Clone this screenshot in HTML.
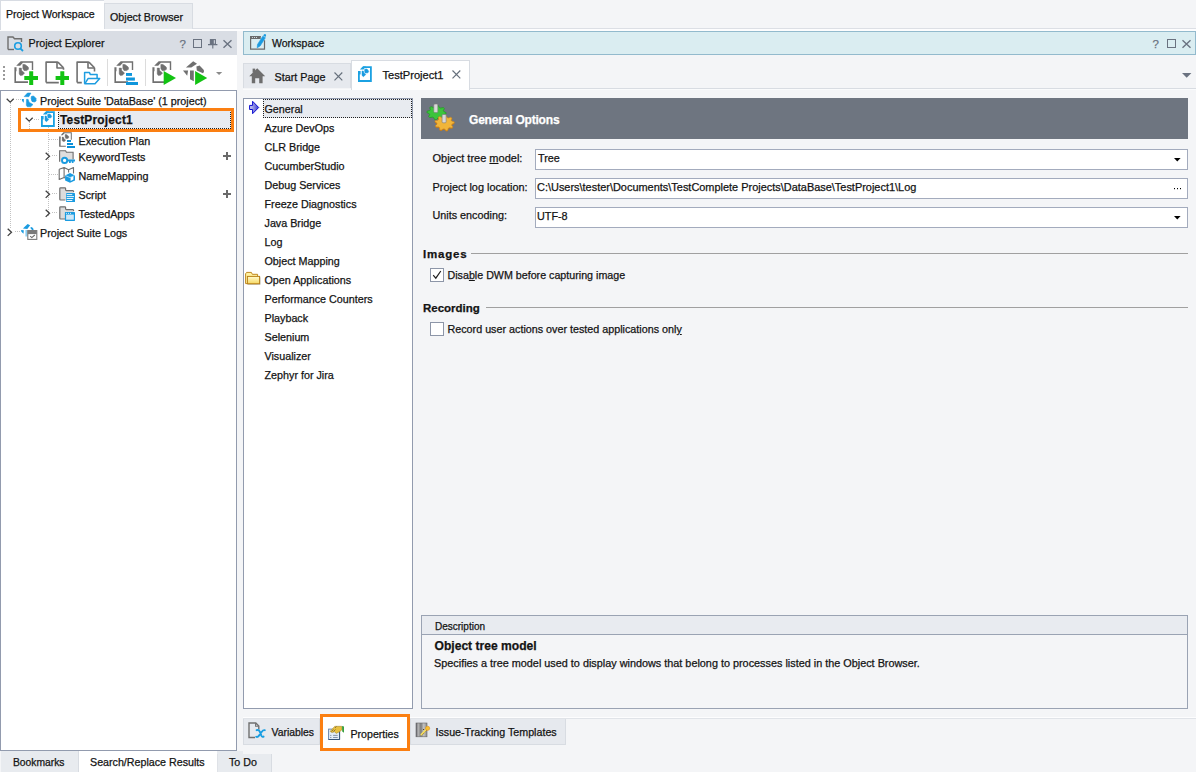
<!DOCTYPE html>
<html><head><meta charset="utf-8">
<style>
html,body{margin:0;padding:0;}
body{width:1196px;height:772px;position:relative;overflow:hidden;background:#f4f5f7;font-family:"Liberation Sans",sans-serif;font-size:10.8px;color:#141414;}
.a{position:absolute;}
.t{position:absolute;white-space:nowrap;line-height:13px;-webkit-text-stroke-width:0.25px;}
.w{-webkit-text-stroke:0.25px #fff;}
.b{font-weight:bold;}
svg{position:absolute;overflow:visible;}
</style></head><body>

<!-- top doc tabs -->
<div class="a" style="left:0;top:28px;width:1196px;height:1px;background:#dcdfe5"></div>
<div class="a" style="left:0;top:29px;width:1196px;height:2px;background:#fdfdfe"></div>
<div class="a" style="left:0;top:0;width:104px;height:30px;background:#fff;border-left:1px solid #d8dce3;border-top:1px solid #d8dce3;box-sizing:border-box"></div>
<div class="t" style="left:6px;top:8px;font-size:10.6px">Project Workspace</div>
<div class="a" style="left:104px;top:3px;width:89px;height:26px;background:#e8ebef;border:1px solid #d8dce2;border-bottom:none;box-sizing:border-box"></div>
<div class="t" style="left:110px;top:11px;font-size:10.7px">Object Browser</div>

<!-- left panel header -->
<div class="a" style="left:0;top:31px;width:237px;height:24px;background:#d9dde4"></div>
<div class="t" style="left:28.5px;top:37px;font-size:10.7px">Project Explorer</div>

<!-- toolbar -->
<div class="a" style="left:0;top:55px;width:237px;height:35px;background:#fff"></div>

<!-- tree -->
<div class="a" style="left:0;top:90px;width:237px;height:661px;background:#fff;border:1px solid #929bae;box-sizing:border-box"></div>


<svg width="0" height="0" style="position:absolute">
<defs>
<g id="tcdoc">
<path d="M4.2 6.7 L8.7 2.2 H21.2 V10.9 H19.8 V3.8 H10.9 L8.2 6.7 Z" fill="#707070"/>
<path d="M2.4 8.3 H4.5 V12.3 H4 V22.3 H16 V24 H2.4 Z" fill="#707070"/>
<path d="M7.2 9 H9.4 L9.7 11.6 L12.6 14 L10.5 16.3 L8.3 16.6 L7.2 15 Z" fill="#707070" stroke="#707070" stroke-width="0.4" stroke-linejoin="round"/>
<path d="M10.9 5.4 L12.9 5.5 L16.2 8 L16.5 10.2 L14.5 11.6 L12 11.5 L10.9 9.5 Z" fill="#707070" stroke="#707070" stroke-width="0.6" stroke-linejoin="round"/>
</g>
<g id="tclogo">
<path d="M5.2 6.6 L8.5 3 L11.9 3.1 L9.8 6.7 Z" fill="#1a9be0" stroke="#1a9be0" stroke-width="0.6" stroke-linejoin="round"/>
<path d="M2.8 9.1 H4.9 L4.7 12.7 L3.1 11.1 Z" fill="#1a9be0"/>
<path d="M7.5 9.3 H9.1 L10.1 12.2 L14 14.5 L11.7 16.8 H8.3 L7.3 15.3 Z" fill="#1a9be0" stroke="#1a9be0" stroke-width="0.5" stroke-linejoin="round"/>
<path d="M12.4 6.5 L14.5 6 L16.8 8.3 L17.1 10.9 L15.3 11.9 L13 11.4 L12.2 8.5 Z" fill="#1a9be0" stroke="#1a9be0" stroke-width="0.8" stroke-linejoin="round"/>
</g>
<g id="fold"><path d="M14.9 3.1 H3.1 V23.6" fill="none" stroke="#707070" stroke-width="1.6" stroke-linejoin="round"/><path d="M14.9 3.1 L20.5 8.7" fill="none" stroke="#707070" stroke-width="1.6"/><path d="M14 3.1 V9 H20.5" fill="none" stroke="#707070" stroke-width="1.6" stroke-linejoin="round"/></g>
<g id="chevd"><path d="M0.7 0.7 L4.2 4.2 L7.7 0.7" fill="none" stroke="#404040" stroke-width="1.3"/></g>
<g id="chevr"><path d="M0.7 0.7 L4.2 4.2 L0.7 7.7" fill="none" stroke="#404040" stroke-width="1.3"/></g>
<g id="gfolder"><path d="M1 14 V1.5 H6 L7.5 3.2 H15 V14 Z" fill="#dcdcdc" stroke="#707070" stroke-width="1.2"/></g>
</defs>
</svg>

<!-- left header icon & buttons -->
<svg style="left:7px;top:35px" width="17" height="16" viewBox="0 0 17 16"><path d="M1 14.5 V2 H6 L7.5 3.8 H14.5 V7" fill="none" stroke="#6e6e6e" stroke-width="1.4"/><path d="M1 14.5 H7" fill="none" stroke="#6e6e6e" stroke-width="1.4"/><circle cx="11" cy="11" r="3.3" fill="none" stroke="#1a9ee2" stroke-width="1.6"/><path d="M13.3 13.3 L16 16" stroke="#1a9ee2" stroke-width="1.8"/></svg>
<div class="t" style="left:179.5px;top:37.5px;font-size:11.5px;color:#6a7280">?</div>
<div class="a" style="left:193px;top:39px;width:9px;height:9px;border:1.3px solid #6a7280;box-sizing:border-box"></div>
<svg style="left:208px;top:39px" width="10" height="10" viewBox="0 0 10 10"><rect x="2.4" y="0.6" width="5" height="4.6" fill="none" stroke="#6a7280" stroke-width="1.1"/><rect x="2.4" y="0.6" width="3.4" height="4.6" fill="#6a7280"/><path d="M0 5.6 H9.4 M4.8 5.6 V9.6" stroke="#6a7280" stroke-width="1.1"/></svg>
<svg style="left:223px;top:40px" width="9" height="8" viewBox="0 0 9 8"><path d="M0.5 0.3 L8.5 7.7 M8.5 0.3 L0.5 7.7" stroke="#6a7280" stroke-width="1.4"/></svg>

<!-- toolbar icons -->
<svg style="left:3px;top:66px" width="3" height="16"><rect x="0" y="0" width="2" height="2" fill="#9a9a9a"/><rect x="0" y="4" width="2" height="2" fill="#9a9a9a"/><rect x="0" y="8" width="2" height="2" fill="#9a9a9a"/><rect x="0" y="12" width="2" height="2" fill="#9a9a9a"/></svg>
<svg style="left:12px;top:59px" width="28" height="28" viewBox="0 0 28 28"><use href="#tcdoc"/><path d="M12.3 17 H26 V21 H12.3 Z M17.2 12.3 H21.2 V26 H17.2 Z" fill="#12c312"/></svg>
<svg style="left:43px;top:59px" width="28" height="28" viewBox="0 0 28 28"><use href="#fold"/><path d="M3.1 23.6 H15.8 M20.5 8.7 V10.8" fill="none" stroke="#707070" stroke-width="1.6"/><path d="M12.6 17 H26 V21 H12.6 Z M17.3 12.3 H21.3 V26 H17.3 Z" fill="#12c312"/></svg>
<svg style="left:74px;top:59px" width="28" height="28" viewBox="0 0 28 28"><use href="#fold"/><path d="M3.1 23.6 H7.8 M20.5 8.7 V12.6" fill="none" stroke="#707070" stroke-width="1.6"/><path d="M10.6 24.8 V13.6 H15.5 L16.4 15.6 H23.1 V19.4" fill="none" stroke="#1e9de0" stroke-width="1.5" stroke-linejoin="round"/><path d="M10.8 24.8 L14 19.6 H25.7 L21 24.8 Z" fill="none" stroke="#1e9de0" stroke-width="1.5" stroke-linejoin="round"/></svg>
<div class="a" style="left:107px;top:59px;width:1px;height:27px;background:#dcdcdc"></div>
<svg style="left:112px;top:59px" width="28" height="28" viewBox="0 0 28 28"><use href="#tcdoc"/><rect x="14" y="14" width="6" height="2.9" fill="#0f96dc"/><rect x="14" y="18.5" width="8.9" height="3.1" fill="#0f96dc"/><rect x="14" y="23" width="12" height="3" fill="#0f96dc"/></svg>
<div class="a" style="left:145px;top:59px;width:1px;height:27px;background:#dcdcdc"></div>
<svg style="left:150px;top:59px" width="28" height="28" viewBox="0 0 28 28"><use href="#tcdoc"/><path d="M13.7 12 L26 19 L13.7 26 Z" fill="#12c312"/></svg>
<svg style="left:181px;top:59px" width="28" height="28" viewBox="0 0 28 28"><path d="M4.9 8.6 L12.2 2.2 L16 4.8 L10.3 8.6 Z" fill="#707070"/><path d="M2 11.4 H7.1 L6.2 16.8 Z" fill="#707070"/><path d="M9 11.4 H12.8 V22.2 L9 20.3 Z" fill="#707070"/><path d="M15.4 7.6 L18.6 6.4 L22.8 11 Q23.6 13 22 14.2 L15.8 11.5 Z" fill="#707070"/><path d="M14.1 12 L26.2 19 L14.1 26 Z" fill="#12c312"/></svg>
<svg style="left:216px;top:72px" width="7" height="4" viewBox="0 0 7 4"><path d="M0 0 H6.2 L3.1 3 Z" fill="#8a8a8a"/></svg>

<!-- tree -->
<svg style="left:0;top:90px" width="237" height="160">
<g fill="none" stroke="#c2c2c2" stroke-width="1" stroke-dasharray="1 1">
<path d="M10.5 13 V138 M16 9.5 H21 M29.5 32 V40 M34 29.5 H40 M48.5 37 V127 M49 49.5 H58 M52 65.5 H58 M49 84.5 H58 M52 103.5 H58 M52 122.5 H58 M15 141.5 H20"/>
</g>
</svg>
<svg style="left:6px;top:98px" width="9" height="6"><use href="#chevd"/></svg>
<svg style="left:19px;top:90px" width="20" height="20" viewBox="0 0 20 20"><use href="#tclogo"/></svg>
<div class="t" style="left:40px;top:95px;font-size:10.75px">Project Suite 'DataBase' (1 project)</div>

<div class="a" style="left:58px;top:110px;width:173px;height:19px;background:#e8ebf0;border:1px dotted #202020;box-sizing:border-box"></div>
<div class="a" style="left:18px;top:108px;width:216px;height:24px;border:3px solid #fb7f12;box-sizing:border-box"></div>
<svg style="left:25px;top:117px" width="9" height="6"><use href="#chevd"/></svg>
<svg style="left:39px;top:109px" width="20" height="20" viewBox="0 0 20 20"><path d="M2.9 10 V17 H14.9 V3.2 H7" fill="#fff" stroke="#1ba1e2" stroke-width="1.8"/><rect x="2" y="7" width="2.6" height="3.4" fill="#1ba1e2"/><path d="M3.9 5.4 L6.7 2.4 H10 L7.5 5.6 Z" fill="#1ba1e2"/><path d="M6 7 H7.3 L8 9.1 L9.8 10.4 L7.5 12.7 L6 11.4 Z" fill="#1a9be0" stroke="#1a9be0" stroke-width="0.5" stroke-linejoin="round"/><path d="M8.8 5.2 L10.9 5 L12.7 7.3 L11.9 8.8 L9.1 8.9 L8.7 7.3 Z" fill="#1a9be0" stroke="#1a9be0" stroke-width="0.6" stroke-linejoin="round"/></svg>
<div class="t b" style="left:60px;top:114px;font-size:11.9px;letter-spacing:0.2px">TestProject1</div>

<svg style="left:56px;top:129px" width="22" height="22" viewBox="0 0 22 22"><path d="M4.8 6.3 L7.3 3.3 H15.8 V10.8 H14.8 V4.3 H8.6 L6.6 6.3 Z" fill="#6e6e6e"/><path d="M3.1 7.4 H4.7 V9.7 H4.6 V16.8 H9.8 V17.8 H3.1 Z" fill="#6e6e6e"/><path d="M6.1 8 H7.4 L8.2 10 L9.8 11 L8.5 12.5 H7 L6.1 11.5 Z" fill="#6e6e6e" stroke="#6e6e6e" stroke-width="0.3" stroke-linejoin="round"/><path d="M9.1 5.6 L10.5 5.4 L12.8 7.5 L12.6 9 L11 9.7 L9.5 9.3 L9.1 7.5 Z" fill="#6e6e6e" stroke="#6e6e6e" stroke-width="0.4" stroke-linejoin="round"/><rect x="11" y="11" width="4" height="2" fill="#0a90d8"/><rect x="11" y="14" width="6" height="2" fill="#0a90d8"/><rect x="11" y="17" width="8" height="2" fill="#0a90d8"/></svg>
<div class="t" style="left:78.5px;top:135px;font-size:10.75px">Execution Plan</div>

<svg style="left:45px;top:152px" width="6" height="9"><path d="M0.7 0.7 L4.5 4.3 L0.7 7.9" fill="none" stroke="#404040" stroke-width="1.3"/></svg>
<svg style="left:56px;top:148px" width="20" height="20" viewBox="0 0 20 20"><path d="M3.6 13.8 V2.7 H9.6 L10.4 4.3 H17.1 V11.5" fill="#dedede" stroke="#6e6e6e" stroke-width="1.1"/><circle cx="8.6" cy="12.4" r="2.6" fill="#fff" stroke="#1a9be0" stroke-width="1.9"/><path d="M11 11.6 H19 V13.5 H11 Z M13 13 H14.8 V14.9 H13 Z M15.8 13 H17.5 V14.9 H15.8 Z" fill="#1a9be0"/></svg>
<div class="t" style="left:78.5px;top:151px;font-size:10.75px">KeywordTests</div>
<svg style="left:223px;top:152px" width="8" height="8"><path d="M4 0 V8 M0 4 H8" stroke="#6a6a6a" stroke-width="2"/></svg>

<svg style="left:56px;top:166px" width="20" height="20" viewBox="0 0 20 20"><path d="M3.2 3.2 L8.1 1.5 L12.6 3.7 L17.5 1.5 V7.5 M3.2 3.2 V13.5 L8.1 11.6 L9.3 12.1 M8.1 1.5 V11.6 M12.6 3.7 V6.6" fill="none" stroke="#6e6e6e" stroke-width="1.1" stroke-linejoin="round"/><path d="M14 7.1 L19 9.4 V14.4 L14 16.7 L9.1 14.4 V9.4 Z" fill="#1a9be0"/><path d="M14.6 11.6 L17.4 10.4 V13.6 L14.6 15 Z" fill="#fff"/><path d="M9.6 9.6 L14 11.6 L18.6 9.6" fill="none" stroke="#fff" stroke-width="0.6"/></svg>
<div class="t" style="left:78.5px;top:170px;font-size:10.75px">NameMapping</div>

<svg style="left:45px;top:190px" width="6" height="9"><path d="M0.7 0.7 L4.5 4.3 L0.7 7.9" fill="none" stroke="#404040" stroke-width="1.3"/></svg>
<svg style="left:56px;top:184px" width="20" height="20" viewBox="0 0 20 20"><path d="M3.8 3.8 H9.6 V6.6 H17.4 V9 H10 V16 H3.8 Z" fill="#dcdcdc"/><path d="M8.9 16 H4.6 Q3.8 16 3.8 15.2 V4.6 Q3.8 3.8 4.6 3.8 H8.8 Q9.6 3.8 9.6 4.6 V5.8 Q9.6 6.6 10.4 6.6 H16.8 Q17.6 6.6 17.6 7.6" fill="none" stroke="#6e6e6e" stroke-width="1.2" stroke-linecap="round"/><rect x="10.1" y="9.1" width="8.9" height="8.9" rx="0.6" fill="#1a9be0"/><path d="M11.1 10.6 H15.9 M11.1 12.6 H17.6 M11.1 14.5 H16.9 M11.1 16.5 H15.9" stroke="#fff" stroke-width="0.9" stroke-linecap="round"/></svg>
<div class="t" style="left:78.5px;top:189px;font-size:10.75px">Script</div>
<svg style="left:223px;top:190px" width="8" height="8"><path d="M4 0 V8 M0 4 H8" stroke="#6a6a6a" stroke-width="2"/></svg>

<svg style="left:45px;top:209px" width="6" height="9"><path d="M0.7 0.7 L4.5 4.3 L0.7 7.9" fill="none" stroke="#404040" stroke-width="1.3"/></svg>
<svg style="left:56px;top:203px" width="20" height="20" viewBox="0 0 20 20"><path d="M3.8 3.8 H9.6 V6.6 H17.4 V9 H10 V16 H3.8 Z" fill="#dcdcdc"/><path d="M8.9 16 H4.6 Q3.8 16 3.8 15.2 V4.6 Q3.8 3.8 4.6 3.8 H8.8 Q9.6 3.8 9.6 4.6 V5.8 Q9.6 6.6 10.4 6.6 H16.8 Q17.6 6.6 17.6 7.6" fill="none" stroke="#6e6e6e" stroke-width="1.2" stroke-linecap="round"/><rect x="8.9" y="9.1" width="10.1" height="8.8" rx="0.6" fill="#1a9be0"/><rect x="10.1" y="11.6" width="7.7" height="5.1" fill="#cfe8f8"/><circle cx="10.4" cy="10.3" r="0.55" fill="#fff"/><circle cx="12.5" cy="10.3" r="0.55" fill="#fff"/><circle cx="14.5" cy="10.3" r="0.55" fill="#fff"/></svg>
<div class="t" style="left:78.5px;top:208px;font-size:10.75px">TestedApps</div>

<svg style="left:7px;top:227.5px" width="6" height="9"><path d="M0.7 0.7 L4.5 4.3 L0.7 7.9" fill="none" stroke="#404040" stroke-width="1.3"/></svg>
<svg style="left:17px;top:220px" width="24" height="24" viewBox="0 0 24 24"><path d="M5.9 8.4 L10.6 4 L13.1 5.3 L10.3 8.9 Z" fill="#1a9be0"/><path d="M4 10 L6.8 10.3 L6.5 13.7 L4.4 11.8 Z" fill="#1a9be0"/><rect x="8.4" y="10" width="2.2" height="6.5" fill="#8ccdf0"/><path d="M13.1 7.8 L14.9 7.1 L16.8 9.3 L15.5 10.6 Z" fill="#1a9be0"/><rect x="10.8" y="10.6" width="9" height="8.8" fill="#fff" stroke="#7a7a7a" stroke-width="1.1"/><rect x="10.8" y="10.3" width="9" height="3.8" fill="#7a7a7a"/><path d="M13.2 16.2 L14.8 17.6 L17.8 15" fill="none" stroke="#6a6a6a" stroke-width="1.1"/></svg>
<div class="t" style="left:40px;top:227px;font-size:10.75px">Project Suite Logs</div>

<!-- bottom-left tabs -->
<div class="a" style="left:1px;top:751px;width:78px;height:21px;background:#e8ebef;border-right:1px solid #d8dce2;box-sizing:border-box"></div>
<div class="t" style="left:13px;top:756px;font-size:10.3px">Bookmarks</div>
<div class="a" style="left:79px;top:751px;width:138px;height:21px;background:#fff"></div>
<div class="t" style="left:90px;top:756px;font-size:10.7px">Search/Replace Results</div>
<div class="a" style="left:217px;top:751px;width:26px;height:3px;background:#e8ebef"></div><div class="a" style="left:217px;top:754px;width:55px;height:18px;background:#e8ebef;border-right:1px solid #d8dce2;border-left:1px solid #dfe2e7;box-sizing:border-box"></div>
<div class="t" style="left:229px;top:756px;font-size:10.7px">To Do</div>

<!-- workspace header -->
<div class="a" style="left:243px;top:31px;width:953px;height:24px;background:#daedf1;border:1px solid #92bacd;box-sizing:border-box"></div>
<div class="t" style="left:272px;top:37px;font-size:10.5px">Workspace</div>


<!-- workspace header icon & buttons -->
<svg style="left:247px;top:31px" width="22" height="22" viewBox="0 0 22 22"><path d="M13.7 5.6 H3.6 V18.2 H17.5 V9.2" fill="none" stroke="#6a6a6a" stroke-width="1.2"/><rect x="3" y="5" width="10.7" height="3" fill="#6a6a6a"/><circle cx="5.4" cy="6.5" r="0.55" fill="#e6f2f5"/><circle cx="7.5" cy="6.5" r="0.55" fill="#e6f2f5"/><circle cx="9.5" cy="6.5" r="0.55" fill="#e6f2f5"/><path d="M10.2 16.8 L10.5 13.4 L15.8 5.2 L18.4 6.7 L13.1 15 Z" fill="#1a9be0" stroke="#1a9be0" stroke-width="0.6" stroke-linejoin="round"/><path d="M16.2 4.6 L16.9 3.4 Q17.6 2.6 18.6 3.2 Q19.4 3.9 19 4.8 L18.4 5.9 Z" fill="#1a9be0"/></svg>
<div class="t" style="left:1152.5px;top:37.5px;font-size:11.5px;color:#6a7280">?</div>
<div class="a" style="left:1167px;top:39px;width:9px;height:9px;border:1.3px solid #6a7280;box-sizing:border-box"></div>
<svg style="left:1182px;top:40px" width="9" height="8" viewBox="0 0 9 8"><path d="M0.5 0.3 L8.5 7.7 M8.5 0.3 L0.5 7.7" stroke="#6a7280" stroke-width="1.4"/></svg>

<!-- tab strip -->
<div class="a" style="left:243px;top:63px;width:108px;height:25px;background:#e6e9ee;border:1px solid #d8dce2;border-bottom:none;box-sizing:border-box"></div>
<div class="t" style="left:274.5px;top:71px;font-size:10.8px">Start Page</div>
<div class="a" style="left:243px;top:89px;width:953px;height:1px;background:#fafbfc"></div><div class="a" style="left:351px;top:60px;width:119px;height:30px;background:#fff;border:1px solid #d8dce2;border-bottom:none;box-sizing:border-box"></div>
<div class="t" style="left:382.5px;top:69px;font-size:11.1px">TestProject1</div>

<svg style="left:249px;top:68px" width="17" height="16" viewBox="0 0 17 16"><path d="M0.2 8.3 L8.2 0.3 L16.2 8.3 H13.6 V15.3 H10.2 V10.2 H6.2 V15.3 H2.8 V8.3 Z" fill="#6e6e6e"/><rect x="3.6" y="0.6" width="2.6" height="4" fill="#6e6e6e"/></svg>
<svg style="left:334px;top:72px" width="9" height="9" viewBox="0 0 9 9"><path d="M0.5 0.5 L8.3 8.3 M8.3 0.5 L0.5 8.3" stroke="#66707c" stroke-width="1.15"/></svg>
<svg style="left:356px;top:64px" width="20" height="20" viewBox="0 0 20 20"><path d="M2.9 10 V17 H14.9 V3.2 H7" fill="#fff" stroke="#1ba1e2" stroke-width="1.8"/><rect x="2" y="7" width="2.6" height="3.4" fill="#1ba1e2"/><path d="M3.9 5.4 L6.7 2.4 H10 L7.5 5.6 Z" fill="#1ba1e2"/><path d="M6 7 H7.3 L8 9.1 L9.8 10.4 L7.5 12.7 L6 11.4 Z" fill="#1a9be0" stroke="#1a9be0" stroke-width="0.5" stroke-linejoin="round"/><path d="M8.8 5.2 L10.9 5 L12.7 7.3 L11.9 8.8 L9.1 8.9 L8.7 7.3 Z" fill="#1a9be0" stroke="#1a9be0" stroke-width="0.6" stroke-linejoin="round"/></svg>
<svg style="left:452px;top:70px" width="9" height="9" viewBox="0 0 9 9"><path d="M0.5 0.5 L8.3 8.3 M8.3 0.5 L0.5 8.3" stroke="#66707c" stroke-width="1.15"/></svg>
<svg style="left:1182px;top:73px" width="10" height="5" viewBox="0 0 10 5"><path d="M0 0 H9.4 L4.7 4.8 Z" fill="#6a7280"/></svg>
<div class="a" style="left:470px;top:88px;width:726px;height:1px;background:#d8dce2"></div>

<!-- categories list -->
<div class="a" style="left:243px;top:98px;width:170px;height:611px;background:#fff;border:1px solid #929bae;box-sizing:border-box"></div>


<div class="a" style="left:263px;top:99px;width:149px;height:19px;background:#e8ebf0;border:1px dotted #202020;box-sizing:border-box"></div>
<svg style="left:244px;top:98px" width="20" height="20" viewBox="0 0 20 20"><defs><linearGradient id="ag" x1="0" x2="1"><stop offset="0" stop-color="#d4d4f4"/><stop offset="1" stop-color="#3a3ad0"/></linearGradient></defs><path d="M5.6 7.4 H8.6 V3.3 L14.7 9.5 L8.6 15.7 V11.5 H5.6 Z" fill="url(#ag)" stroke="#0a0ad0" stroke-width="1" stroke-linejoin="miter"/></svg>
<svg style="left:242px;top:268px" width="22" height="22" viewBox="0 0 22 22"><defs><linearGradient id="fg" x1="0" x2="0" y1="0" y2="1"><stop offset="0" stop-color="#fffbd0"/><stop offset="1" stop-color="#f7d860"/></linearGradient></defs><rect x="5.8" y="9.3" width="12.6" height="7.3" fill="#5a6478" opacity="0.5"/><path d="M3.6 15.6 V5.8 L4.6 4.4 H9.4 L10.3 6.3 H15.6 V15.6 Z" fill="#fff2a0" stroke="#c08820" stroke-width="1"/><rect x="5.4" y="8.4" width="12.2" height="7.4" fill="url(#fg)" stroke="#b88018" stroke-width="1"/></svg>
<div class="t" style="left:264.5px;top:103px;font-size:10.75px">General</div>
<div class="t" style="left:264.5px;top:122px;font-size:10.75px">Azure DevOps</div>
<div class="t" style="left:264.5px;top:141px;font-size:10.75px">CLR Bridge</div>
<div class="t" style="left:264.5px;top:160px;font-size:10.75px">CucumberStudio</div>
<div class="t" style="left:264.5px;top:179px;font-size:10.75px">Debug Services</div>
<div class="t" style="left:264.5px;top:198px;font-size:10.75px">Freeze Diagnostics</div>
<div class="t" style="left:264.5px;top:217px;font-size:10.75px">Java Bridge</div>
<div class="t" style="left:264.5px;top:236px;font-size:10.75px">Log</div>
<div class="t" style="left:264.5px;top:255px;font-size:10.75px">Object Mapping</div>
<div class="t" style="left:264.5px;top:274px;font-size:10.75px">Open Applications</div>
<div class="t" style="left:264.5px;top:293px;font-size:10.75px">Performance Counters</div>
<div class="t" style="left:264.5px;top:312px;font-size:10.75px">Playback</div>
<div class="t" style="left:264.5px;top:331px;font-size:10.75px">Selenium</div>
<div class="t" style="left:264.5px;top:350px;font-size:10.75px">Visualizer</div>
<div class="t" style="left:264.5px;top:369px;font-size:10.75px">Zephyr for Jira</div>

<!-- general options header -->
<div class="a" style="left:421px;top:98px;width:767px;height:41px;background:#6e7580"></div>
<div class="t b" style="left:469px;top:113.5px;font-size:12px;letter-spacing:-0.2px;color:#fff">General Options</div>


<svg style="left:422px;top:100px" width="38" height="36" viewBox="0 0 38 36">
<path d="M14.50 5.50 L16.37 5.63 L17.33 7.54 L18.61 8.05 L21.29 7.58 L22.48 8.65 L21.34 10.50 L21.76 11.53 L24.10 12.60 L23.92 13.99 L21.34 14.70 L20.65 15.64 L21.29 17.62 L19.83 18.51 L17.33 17.66 L15.94 17.97 L14.50 19.70 L12.63 19.57 L11.67 17.66 L10.39 17.15 L7.71 17.62 L6.52 16.55 L7.66 14.70 L7.24 13.67 L4.90 12.60 L5.08 11.21 L7.66 10.50 L8.35 9.56 L7.71 7.58 L9.17 6.69 L11.67 7.54 L13.06 7.23 Z" fill="#3cc43c" stroke="#1f9a1f" stroke-width="0.7" stroke-linejoin="round"/>
<path d="M22.50 15.46 L24.20 15.57 L25.10 17.53 L26.30 17.97 L28.80 17.24 L30.01 18.19 L29.08 20.14 L29.64 21.07 L32.15 21.77 L32.30 23.10 L29.98 24.13 L29.64 25.13 L30.99 26.92 L30.01 28.01 L27.39 27.64 L26.30 28.23 L25.85 30.28 L24.20 30.63 L22.50 29.03 L21.18 28.94 L19.15 30.28 L17.60 29.72 L17.61 27.64 L16.68 26.91 L14.01 26.92 L13.29 25.71 L15.02 24.13 L14.90 23.10 L12.85 21.77 L13.29 20.49 L15.92 20.14 L16.68 19.29 L16.20 17.24 L17.60 16.48 L19.90 17.53 L21.18 17.26 Z" transform="translate(0,0.8)" fill="#c87a18"/>
<path d="M22.50 15.46 L24.20 15.57 L25.10 17.53 L26.30 17.97 L28.80 17.24 L30.01 18.19 L29.08 20.14 L29.64 21.07 L32.15 21.77 L32.30 23.10 L29.98 24.13 L29.64 25.13 L30.99 26.92 L30.01 28.01 L27.39 27.64 L26.30 28.23 L25.85 30.28 L24.20 30.63 L22.50 29.03 L21.18 28.94 L19.15 30.28 L17.60 29.72 L17.61 27.64 L16.68 26.91 L14.01 26.92 L13.29 25.71 L15.02 24.13 L14.90 23.10 L12.85 21.77 L13.29 20.49 L15.92 20.14 L16.68 19.29 L16.20 17.24 L17.60 16.48 L19.90 17.53 L21.18 17.26 Z" fill="#f0b53a" stroke="#c8801a" stroke-width="0.6" stroke-linejoin="round"/>
<rect x="11.8" y="4" width="4" height="8.6" rx="1" fill="#d8d8d8" stroke="#7a7a7a" stroke-width="0.6"/>
<rect x="20.1" y="14.5" width="4" height="8.3" rx="1" fill="#d8d8d8" stroke="#7a7a7a" stroke-width="0.6"/>
</svg>

<div class="t" style="left:432.5px;top:152px;font-size:11px">Object tree <u>m</u>odel:</div>
<div class="t" style="left:432.5px;top:181px;font-size:10.9px">Pro<u>j</u>ect log location:</div>
<div class="t" style="left:432.5px;top:209px;font-size:10.8px">Units encodin<u>g</u>:</div>

<div class="a" style="left:535px;top:149px;width:653px;height:21px;background:#fff;border:1px solid #a3abbd;box-sizing:border-box"></div>
<div class="t" style="left:538px;top:152px;font-size:10.8px">Tree</div>
<svg style="left:1174px;top:158px" width="7" height="4" viewBox="0 0 7 4"><path d="M0 0 H6.6 L3.3 3.6 Z" fill="#000"/></svg>

<div class="a" style="left:535px;top:178px;width:653px;height:21px;background:#fff;border:1px solid #a3abbd;box-sizing:border-box"></div>
<div class="t" style="left:537px;top:181px;font-size:10.95px">C:\Users\tester\Documents\TestComplete Projects\DataBase\TestProject1\Log</div>
<svg style="left:1174px;top:188px" width="8" height="2"><rect x="0" y="0" width="1" height="1.2" fill="#000"/><rect x="3" y="0" width="1" height="1.2" fill="#000"/><rect x="6" y="0" width="1" height="1.2" fill="#000"/></svg>

<div class="a" style="left:535px;top:207px;width:653px;height:21px;background:#fff;border:1px solid #a3abbd;box-sizing:border-box"></div>
<div class="t" style="left:537px;top:210px;font-size:10.8px">UTF-8</div>
<svg style="left:1174px;top:216px" width="7" height="4" viewBox="0 0 7 4"><path d="M0 0 H6.6 L3.3 3.6 Z" fill="#000"/></svg>

<div class="t b" style="left:423px;top:248px;font-size:11.5px;letter-spacing:0.8px">Images</div>
<div class="a" style="left:471px;top:253px;width:717px;height:1px;background:#a0a0a0"></div>
<div class="a" style="left:430px;top:268px;width:14px;height:14px;background:#fff;border:1px solid #8d96a8;box-sizing:border-box"></div>
<svg style="left:432px;top:270px" width="10" height="10" viewBox="0 0 10 10"><path d="M1.2 5.2 L3.8 8.2 L8.8 1" fill="none" stroke="#202020" stroke-width="1.2"/></svg>
<div class="t" style="left:447.5px;top:269px;font-size:10.7px">Disa<u>b</u>le DWM before capturing image</div>

<div class="t b" style="left:423px;top:302px;font-size:11.5px">Recording</div>
<div class="a" style="left:486px;top:307px;width:702px;height:1px;background:#a0a0a0"></div>
<div class="a" style="left:430px;top:322px;width:14px;height:14px;background:#fff;border:1px solid #8d96a8;box-sizing:border-box"></div>
<div class="t" style="left:447.5px;top:323px;font-size:10.75px">Record user actions over tested applications onl<u>y</u></div>

<!-- description -->
<div class="a" style="left:421px;top:615px;width:767px;height:94px;border:1px solid #9aa3b3;box-sizing:border-box"></div>
<div class="a" style="left:422px;top:616px;width:765px;height:18px;background:#e8ebf0;border-bottom:1px solid #9aa3b3"></div>


<div class="t" style="left:435px;top:620px;font-size:10px">Description</div>
<div class="t b" style="left:434.5px;top:640px;font-size:12.1px">Object tree model</div>
<div class="t" style="left:434px;top:657px;font-size:10.85px">Specifies a tree model used to display windows that belong to processes listed in the Object Browser.</div>

<!-- bottom tabs right -->
<div class="a" style="left:243px;top:717px;width:953px;height:1px;background:#fdfdfe"></div><div class="a" style="left:243px;top:718px;width:953px;height:1px;background:#e0e3e8"></div>
<div class="a" style="left:243px;top:719px;width:77px;height:26px;background:#e6e9ee;border:1px solid #d8dce2;border-top:none;box-sizing:border-box"></div>
<div class="a" style="left:320px;top:714px;width:90px;height:37px;background:#fff;border:3px solid #fb7f12;box-sizing:border-box"></div>
<div class="a" style="left:410px;top:719px;width:156px;height:26px;background:#e6e9ee;border:1px solid #d8dce2;border-top:none;box-sizing:border-box"></div>


<svg style="left:248px;top:722px" width="20" height="18" viewBox="0 0 20 18"><path d="M7 15.5 H1 V1 H7.8 L10.8 4 V7.5" fill="none" stroke="#707070" stroke-width="1.4"/><path d="M7.6 1.2 V4.2 H10.6" fill="none" stroke="#707070" stroke-width="1.1"/><path d="M8.6 8.2 Q10.8 7.4 11.8 9.6 L13.4 13.6 Q14.2 15.4 15.6 14.6 M16.8 8.2 Q15.2 7.8 13.6 10 L11.2 13.4 Q9.6 15.6 8.2 14.8" fill="none" stroke="#1a9ee2" stroke-width="1.9" stroke-linecap="round"/></svg>
<div class="t" style="left:271.5px;top:726px;font-size:10.4px">Variables</div>
<svg style="left:324px;top:722px" width="24" height="22" viewBox="0 0 24 22"><rect x="4.6" y="7.1" width="11" height="10.4" fill="#e2ecf9" stroke="#5c7ca6" stroke-width="0.9"/><path d="M4.6 17.5 H15.6 V7.1" fill="none" stroke="#2f4d72" stroke-width="0.9"/><path d="M6.1 13.4 H7.4 M9.1 13.4 H13.7 M6.1 15.5 H7.4 M9.1 15.5 H13.7" stroke="#7a8aa0" stroke-width="0.9"/><path d="M6.1 9.4 L10.8 4.3 H17.7 L18.2 7.4 L16 9.4 L12.3 11.4 L10.5 9.8 L8 10.6 Z" fill="#e8c040" stroke="#9a7a20" stroke-width="0.5"/><path d="M7.5 9.5 L9.5 7.5 M9.5 9.5 L11.5 7.5 M11 6 L12.5 4.5" stroke="#6a5a30" stroke-width="0.7"/><path d="M18 4 L20 4.5 V10.8 L18.2 9.4 Z" fill="#3aa040"/></svg>
<div class="t" style="left:350.5px;top:728px;font-size:10.6px">Properties</div>
<svg style="left:412px;top:720px" width="22" height="20" viewBox="0 0 22 20"><defs><linearGradient id="nb" x1="0" x2="1" y1="0" y2="0"><stop offset="0" stop-color="#5a5a62"/><stop offset="0.2" stop-color="#b8b8b8"/><stop offset="0.45" stop-color="#7a7a7a"/><stop offset="0.7" stop-color="#c4c4c4"/><stop offset="1" stop-color="#8a8a8a"/></linearGradient></defs><rect x="4" y="3" width="11" height="13.8" fill="url(#nb)" stroke="#666" stroke-width="0.6"/><path d="M9.3 14.6 L14.6 9.2" stroke="#f5e060" stroke-width="1.8" stroke-linecap="round"/><path d="M10 15.2 L14.8 10.2" stroke="#8a5a00" stroke-width="0.8" stroke-dasharray="1 1"/><circle cx="15.6" cy="8.3" r="2.1" fill="#f7c030" stroke="#e09020" stroke-width="0.6"/><circle cx="11.6" cy="9.5" r="0.6" fill="#4a3000"/></svg>
<div class="t" style="left:435.5px;top:726px;font-size:10.7px">Issue-Tracking Templates</div>

</body></html>
